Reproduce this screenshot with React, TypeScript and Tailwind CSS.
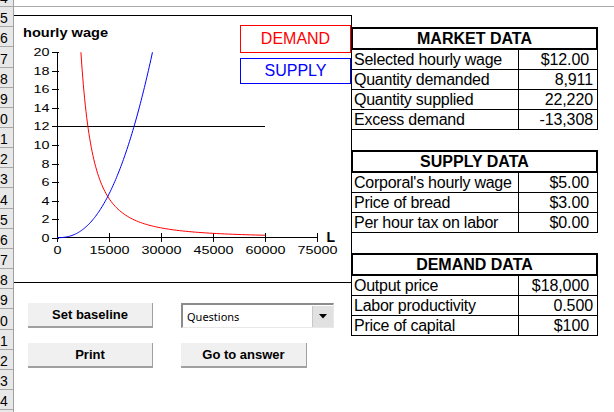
import React from "react";

const rowHeights = [21, 20, 20, 21, 20, 20, 20, 20, 20, 20, 21, 20, 20, 20, 20, 20, 21, 20, 20, 20, 20];

const X = (L: number) => 57 + (L / 15000) * 52;
const Y = (w: number) => 237.7 - w * 9.27;

const demandPts: string[] = [];
for (let i = 0; i <= 90; i++) {
  const L = 6902 * Math.pow(60000 / 6902, i / 90);
  const w = 12 * Math.pow(8911 / L, 2);
  demandPts.push(`${X(L).toFixed(2)},${Y(w).toFixed(2)}`);
}
const supplyPts: string[] = [];
for (let i = 0; i <= 100; i++) {
  const w = 20 * Math.pow(i / 100, 2);
  const L = 22220 * Math.pow(w / 12, 0.42);
  supplyPts.push(`${X(L).toFixed(2)},${Y(w).toFixed(2)}`);
}

const yTicks = [0, 2, 4, 6, 8, 10, 12, 14, 16, 18, 20];
const xTicks = [0, 15000, 30000, 45000, 60000, 75000];

type Row = { label: string; value: string; cur: boolean };

function DataTable({ title, rows }: { title: string; rows: Row[] }) {
  return (
    <div className="w-[247px] flex flex-col">
      <div className="h-[23px] border-2 border-black text-center font-bold text-[16px] leading-[19px] text-black">
        {title}
      </div>
      {rows.map((r) => (
        <div key={r.label} className="flex h-[20px] border-b border-black">
          <div className="w-[168px] border-l border-r border-black pl-[2px] text-[16px] leading-[19px] tracking-[-0.25px] whitespace-nowrap overflow-hidden text-black">
            {r.label}
          </div>
          <div
            className={`flex-1 border-r border-black text-right text-[16px] leading-[19px] tracking-[-0.1px] whitespace-nowrap text-black ${
              r.cur ? "pr-[8px]" : "pr-[4px]"
            }`}
          >
            {r.value}
          </div>
        </div>
      ))}
    </div>
  );
}

function Btn({ label, w }: { label: string; w: string }) {
  return (
    <button
      className={`${w} h-[25px] bg-[#f0f0f0] border-r border-b-2 border-r-[#a0a0a0] border-b-[#a0a0a0] font-bold text-[13px] text-black flex items-center justify-center leading-none`}
    >
      {label}
    </button>
  );
}

export default function App() {
  return (
    <div className="w-[614px] h-[412px] overflow-hidden bg-white flex font-['Liberation_Sans',Arial,sans-serif] text-black">
      {/* row headers (only the last digit of each row number is visible in the narrow column) */}
      <div className="w-[14px] shrink-0 bg-[#e8e8e8] border-r border-[#a0a0a0] flex flex-col">
        {rowHeights.map((h, i) => (
          <div
            key={i}
            className={`${h === 21 ? "h-[21px]" : "h-[20px]"} ${
              i === 0 ? "-mt-[14px]" : ""
            } shrink-0 border-b border-[#a8a8a8] flex items-end justify-start pl-[0px] pb-[1px] text-[14px] leading-none`}
          >
            {(i + 4) % 10}
          </div>
        ))}
      </div>

      {/* sheet */}
      <div className="flex-1 flex flex-col">
        <div className="h-[7px] border-b border-[#ababab] shrink-0" />
        <div className="flex">
          {/* left column */}
          <div className="w-[338px] shrink-0 flex flex-col">
            <div className="mt-[8px] h-[268px] border-t border-r border-b border-black relative">
              <svg width="337" height="266" viewBox="14 16 337 266" className="block">
                <text x="23" y="36.5" fontSize="12" fontWeight="bold" textLength="85" lengthAdjust="spacingAndGlyphs" fill="#000">
                  hourly wage
                </text>
                {/* axes */}
                <line x1="57.5" y1="52" x2="57.5" y2="238" stroke="#000" strokeWidth="1" />
                <line x1="57" y1="237.5" x2="318" y2="237.5" stroke="#000" strokeWidth="1" />
                {yTicks.map((t) => {
                  const y = Math.round(Y(t)) + 0.5;
                  return (
                    <g key={t}>
                      <line x1="52" y1={y} x2="59" y2={y} stroke="#000" strokeWidth="1" />
                      <g transform={`translate(49.5 ${y + 3.8}) scale(1.25 1)`}>
                        <text textAnchor="end" fontSize="11.5" fill="#000">
                          {t}
                        </text>
                      </g>
                    </g>
                  );
                })}
                {xTicks.map((t) => {
                  const x = Math.round(X(t)) + 0.5;
                  return (
                    <g key={t}>
                      <line x1={x} y1="233" x2={x} y2="242" stroke="#000" strokeWidth="1" />
                      <g transform={`translate(${x} 254) scale(1.25 1)`}>
                        <text textAnchor="middle" fontSize="11.5" fill="#000">
                          {t}
                        </text>
                      </g>
                    </g>
                  );
                })}
                <text x="326.5" y="242" fontSize="14" fontWeight="bold" fill="#000">
                  L
                </text>
                {/* wage line */}
                <line x1="57" y1="126.5" x2="265" y2="126.5" stroke="#000" strokeWidth="1" />
                <polyline points={demandPts.join(" ")} fill="none" stroke="#ff0000" strokeWidth="1" />
                <polyline points={supplyPts.join(" ")} fill="none" stroke="#0000ff" strokeWidth="1" />
              </svg>
              <div className="absolute left-[226px] top-[9px] w-[111px] h-[28px] border border-[#ff0000] bg-white flex items-center justify-center text-[16px] text-[#ff0000] leading-none">
                DEMAND
              </div>
              <div className="absolute left-[226px] top-[42px] w-[111px] h-[26px] border border-[#0000ff] bg-white flex items-center justify-center text-[16px] text-[#0000ff] leading-none">
                SUPPLY
              </div>
            </div>

            {/* controls */}
            <div className="mt-[20px] ml-[14px] flex flex-col gap-[15px]">
              <div className="flex gap-[28px]">
                <Btn label="Set baseline" w="w-[125px]" />
                <div className="w-[153px] h-[25px] flex bg-white border-t-2 border-l-2 border-t-[#8c8c8c] border-l-[#8c8c8c] border-r border-b border-r-[#e8e8e8] border-b-[#e8e8e8]">
                  <div className="flex-1 flex items-center pl-[4px] text-[11px] font-['Noto_Sans',sans-serif] leading-none">
                    Questions
                  </div>
                  <div className="w-[21px] mt-[1px] bg-[#e1e1e1] border-l border-[#c8c8c8] flex items-center justify-center">
                    <svg width="8" height="5" viewBox="0 0 8 5">
                      <polygon points="0,0 8,0 4,4.5" fill="#000" />
                    </svg>
                  </div>
                </div>
              </div>
              <div className="flex gap-[28px]">
                <Btn label="Print" w="w-[125px]" />
                <Btn label="Go to answer" w="w-[126px]" />
              </div>
            </div>
          </div>

          {/* right column: tables */}
          <div className="-ml-px mt-[20px] flex flex-col gap-[20px]">
            <DataTable
              title="MARKET DATA"
              rows={[
                { label: "Selected hourly wage", value: "$12.00", cur: true },
                { label: "Quantity demanded", value: "8,911", cur: false },
                { label: "Quantity supplied", value: "22,220", cur: false },
                { label: "Excess demand", value: "-13,308", cur: false },
              ]}
            />
            <DataTable
              title="SUPPLY DATA"
              rows={[
                { label: "Corporal's hourly wage", value: "$5.00", cur: true },
                { label: "Price of bread", value: "$3.00", cur: true },
                { label: "Per hour tax on labor", value: "$0.00", cur: true },
              ]}
            />
            <DataTable
              title="DEMAND DATA"
              rows={[
                { label: "Output price", value: "$18,000", cur: true },
                { label: "Labor productivity", value: "0.500", cur: false },
                { label: "Price of capital", value: "$100", cur: true },
              ]}
            />
          </div>
        </div>
      </div>
    </div>
  );
}
